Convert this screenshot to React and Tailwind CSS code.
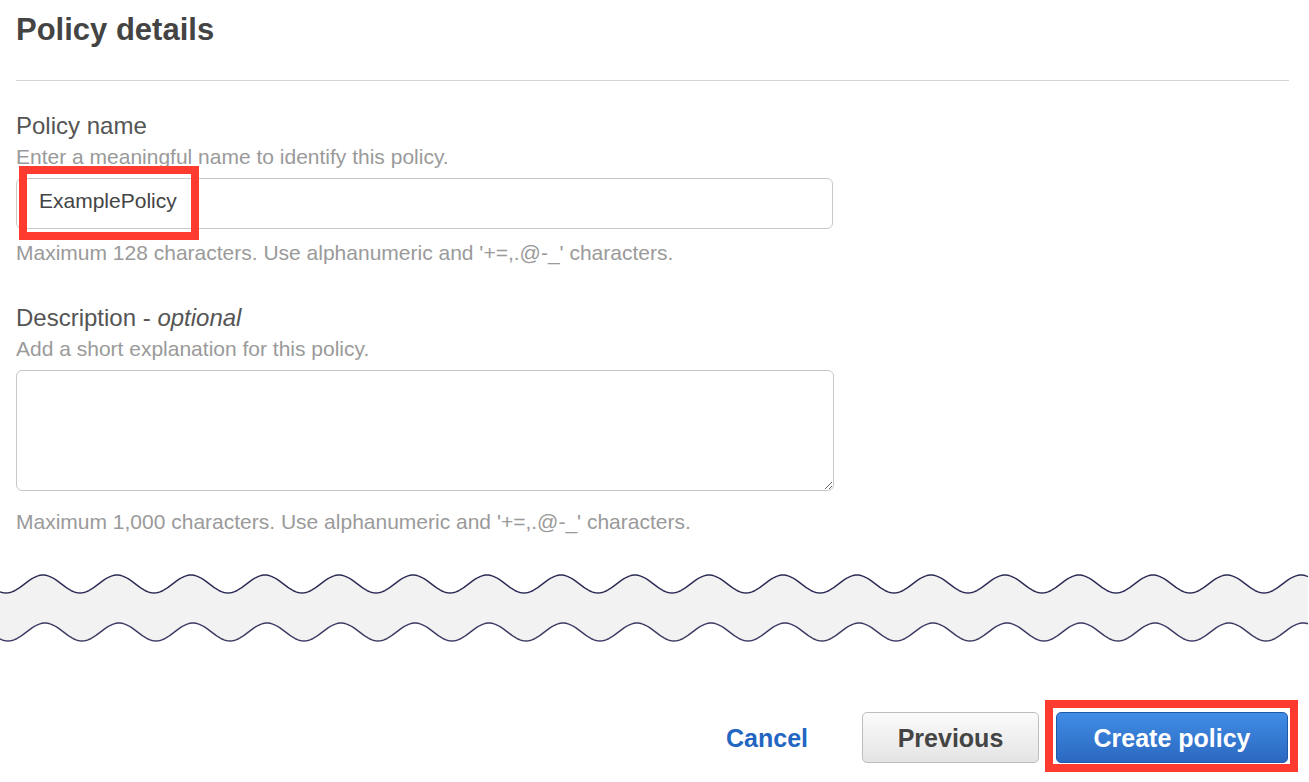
import React from "react";

function wavePoints(c, A, x0, period, width, step = 2) {
  const pts = [];
  for (let x = 0; x <= width; x += step) {
    const y = c - A * Math.cos((2 * Math.PI * (x - x0)) / period);
    pts.push([x, y]);
  }
  return pts;
}

function Waves() {
  const W = 1309;
  const top = wavePoints(14, 9, 43, 74, W);
  const bot = wavePoints(62, 9, 45, 74, W);
  const toD = (pts) => pts.map((p, i) => `${i ? "L" : "M"}${p[0].toFixed(1)} ${p[1].toFixed(2)}`).join(" ");
  const fill =
    toD(top) +
    " " +
    bot
      .slice()
      .reverse()
      .map((p) => `L${p[0].toFixed(1)} ${p[1].toFixed(2)}`)
      .join(" ") +
    " Z";
  return (
    <svg width={W} height="80" viewBox={`0 0 ${W} 80`} className="block">
      <path d={fill} fill="#f2f2f2" />
      <path d={toD(top)} fill="none" stroke="#2b2b55" strokeWidth="1.4" />
      <path d={toD(bot)} fill="none" stroke="#3b3b63" strokeWidth="1.4" />
    </svg>
  );
}

export default function App() {
  return (
    <div className="w-[1309px] h-[782px] overflow-hidden bg-white font-['Liberation_Sans',Arial,sans-serif]">
      <div className="pl-4 pr-5">
        <h1 className="pt-[12px] h-[48px] text-[31px] leading-[36px] font-bold text-[#444]">Policy details</h1>
        <div className="mt-[32px] h-px bg-[#d5d5d5]" />

        <div className="mt-[31px] text-[24px] leading-[28px] text-[#555]">Policy name</div>
        <div className="mt-[6px] text-[21px] leading-[22px] text-[#9a9a9a]">Enter a meaningful name to identify this policy.</div>
        <div className="relative mt-[10px] w-[817px] h-[51px] rounded-[6px] border border-[#c8c8c8] flex items-center pl-[22px] pb-[5px] text-[21px] text-[#444]">
          ExamplePolicy
          <div className="absolute left-[2px] top-[-13px] w-[180px] h-[74px] border-[8px] border-[#ff3b2f]" />
        </div>
        <div className="mt-[13px] text-[21px] leading-[22px] text-[#9a9a9a]">
          Maximum 128 characters. Use alphanumeric and '+=,.@-_' characters.
        </div>

        <div className="mt-[40px] text-[24px] leading-[28px] text-[#555]">
          Description - <span className="italic">optional</span>
        </div>
        <div className="mt-[6px] text-[21px] leading-[22px] text-[#9a9a9a]">Add a short explanation for this policy.</div>
        <textarea className="mt-[10px] block w-[818px] h-[121px] rounded-[6px] border border-[#c8c8c8] resize-y outline-none" />
        <div className="mt-[20px] text-[21px] leading-[22px] text-[#9a9a9a]">
          Maximum 1,000 characters. Use alphanumeric and '+=,.@-_' characters.
        </div>
      </div>

      <div className="mt-[37px]">
        <Waves />
      </div>

      <div className="mt-[62px] flex justify-end items-center pr-[21px]">
        <button className="mr-[54px] pt-[3px] text-[25px] font-bold text-[#2266c2]">Cancel</button>
        <button className="w-[177px] h-[51px] pt-[3px] rounded-[5px] border border-[#bdbdbd] bg-gradient-to-b from-[#fbfbfb] to-[#e4e4e4] text-[25px] font-bold text-[#444]">
          Previous
        </button>
        <div className="relative ml-[17px]">
          <button className="w-[232px] h-[51px] pt-[3px] rounded-[5px] border border-[#1f5aa8] bg-gradient-to-b from-[#418de6] to-[#2b68c0] text-[25px] font-bold text-white">
            Create policy
          </button>
          <div className="absolute left-[-11px] top-[-12px] w-[253px] h-[72px] border-[8px] border-[#ff3b2f]" />
        </div>
      </div>
    </div>
  );
}
